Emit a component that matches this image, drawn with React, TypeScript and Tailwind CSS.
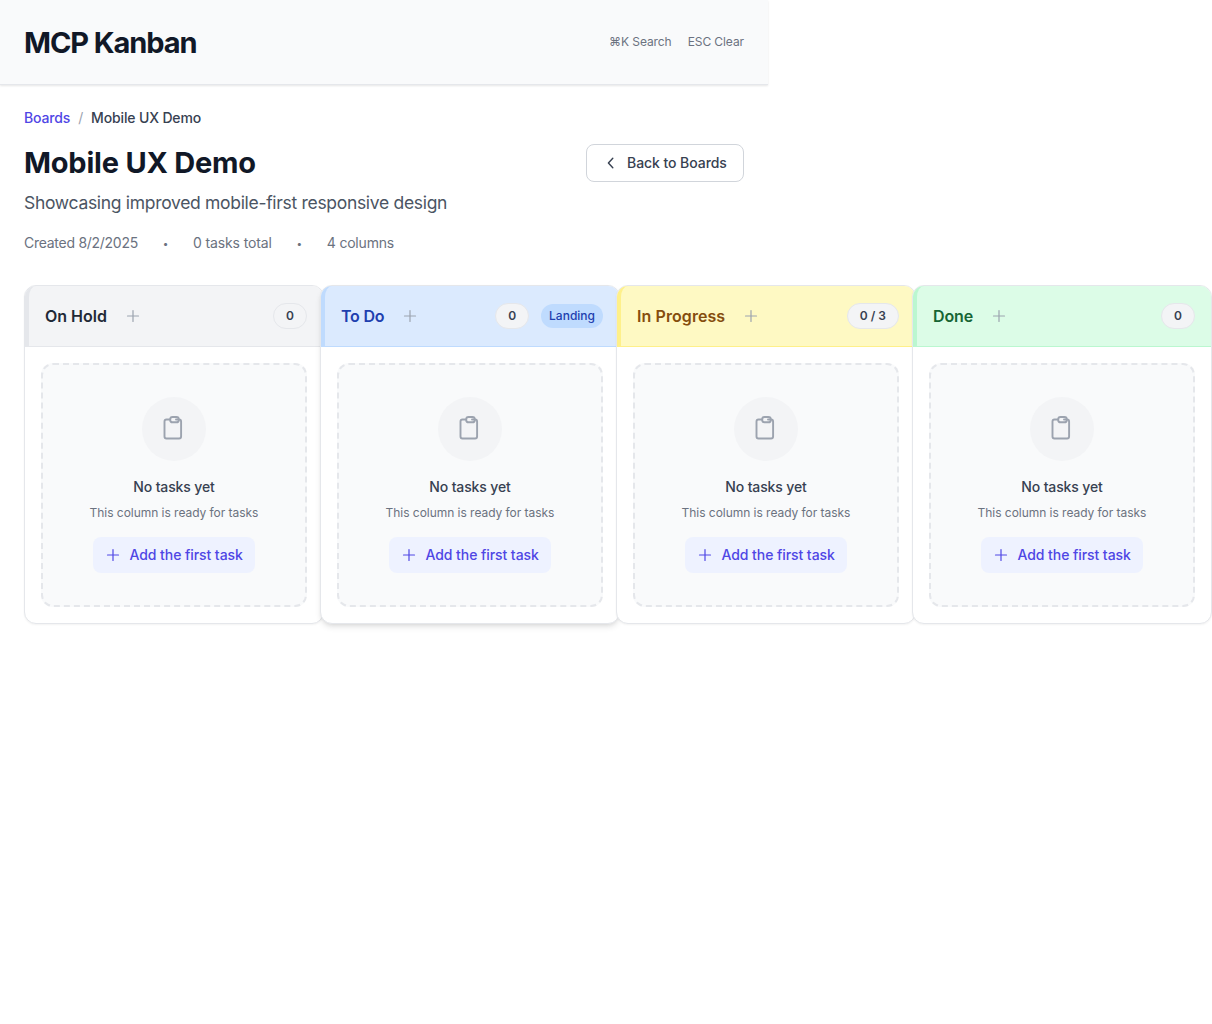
import React from "react";

type Column = {
  name: string;
  count: string;
  landing?: boolean;
  header: string;
  title: string;
  shadow: string;
};

const columns: Column[] = [
  { name: "On Hold", count: "0", header: "bg-[#f3f4f6] border-[#e5e7eb]", title: "text-[#1f2937]", shadow: "shadow-[0_1px_2px_rgba(0,0,0,0.05)]" },
  { name: "To Do", count: "0", landing: true, header: "bg-[#dbeafe] border-[#bfdbfe]", title: "text-[#1e40af] tracking-[-0.2px]", shadow: "shadow-[0_4px_6px_-1px_rgba(0,0,0,0.1),0_2px_4px_-2px_rgba(0,0,0,0.1)]" },
  { name: "In Progress", count: "0 / 3", header: "bg-[#fef9c3] border-[#fef08a]", title: "text-[#854d0e] tracking-[0.08px]", shadow: "shadow-[0_1px_2px_rgba(0,0,0,0.05)]" },
  { name: "Done", count: "0", header: "bg-[#dcfce7] border-[#bbf7d0]", title: "text-[#166534] tracking-[-0.15px]", shadow: "shadow-[0_1px_2px_rgba(0,0,0,0.05)]" },
];

function Plus({ className }: { className: string }) {
  return (
    <svg className={className} viewBox="0 0 16 16" fill="none" stroke="currentColor" strokeWidth="1.2" strokeLinecap="round">
      <path d="M8 2.5v11M2.5 8h11" />
    </svg>
  );
}

function Clipboard() {
  return (
    <svg className="-ml-[3px] h-7 w-7 text-[#9ca3af]" viewBox="0 0 28 28" fill="none" stroke="currentColor" strokeWidth="1.9" strokeLinecap="round" strokeLinejoin="round">
      <path d="M11.2 4.5H7.5A2 2 0 0 0 5.5 6.5V21.5A2 2 0 0 0 7.5 23.5H20.1A2 2 0 0 0 22.1 21.5V6.5A2 2 0 0 0 20.1 4.5H17" />
      <rect x="11.2" y="2" width="8.6" height="5.3" rx="2.4" />
    </svg>
  );
}

function BoardColumn({ column }: { column: Column }) {
  return (
    <section className={`-mr-1 w-[300px] shrink-0 rounded-xl border border-[#e5e7eb] bg-white ${column.shadow}`}>
      <header className={`flex h-[61px] items-center justify-between rounded-t-[11px] border-b border-l-4 pr-4 pl-4 ${column.header}`}>
        <div className="flex items-center">
          <h2 className={`text-base font-semibold ${column.title}`}>{column.name}</h2>
          <button className="ml-[18px] text-[#9ca3af]"><Plus className="h-4 w-4" /></button>
        </div>
        <div className="flex items-center gap-3">
          <span className="flex h-[26px] items-center rounded-full border border-[#e5e7eb] bg-[#f3f4f6] px-3 text-xs font-semibold text-[#374151]">{column.count}</span>
          {column.landing && <span className="flex h-6 items-center rounded-full bg-[#bfdbfe] px-2 text-xs font-medium text-[#1e40af]">Landing</span>}
        </div>
      </header>
      <div className="p-4">
        <div className="flex h-[244px] flex-col items-center rounded-xl border-2 border-dashed border-[#e5e7eb] bg-[#f9fafb] pt-8">
          <div className="flex h-16 w-16 items-center justify-center rounded-full bg-[#f3f4f6]"><Clipboard /></div>
          <h3 className="mt-4 text-sm font-medium tracking-[-0.12px] text-[#374151]">No tasks yet</h3>
          <p className="mt-2 text-xs leading-4 tracking-[-0.04px] text-[#6b7280]">This column is ready for tasks</p>
          <button className="mt-4 flex h-9 w-[162px] items-center gap-[8.5px] rounded-lg bg-[#eef2ff] px-3 text-sm font-medium tracking-[-0.07px] whitespace-nowrap text-[#4f46e5]">
            <Plus className="h-4 w-4 shrink-0" />
            Add the first task
          </button>
        </div>
      </div>
    </section>
  );
}

export default function App() {
  return (
    <div className="min-h-screen w-[1212px] overflow-hidden bg-white font-['Inter',sans-serif]">
      <header className="flex h-[85px] w-[768px] items-center justify-between border-b border-[#e5e7eb] bg-[#f9fafb] px-6 shadow-[0_1px_2px_rgba(0,0,0,0.1)]">
        <h1 className="pt-0.5 text-[29px] leading-9 font-bold tracking-[-1.1px] text-[#111827]">MCP Kanban</h1>
        <div className="flex gap-4 text-xs tracking-[-0.08px] text-[#6b7280]">
          <span>⌘K Search</span>
          <span>ESC Clear</span>
        </div>
      </header>
      <main className="w-[768px] px-6 pt-[23px]">
        <nav className="flex gap-2 text-sm tracking-[-0.15px]">
          <a className="font-medium text-[#4f46e5]">Boards</a>
          <span className="text-[#9ca3af]">/</span>
          <span className="font-medium text-[#374151]">Mobile UX Demo</span>
        </nav>
        <div className="mt-4 flex items-start justify-between">
          <div>
            <h2 className="text-[29px] leading-[38px] font-bold tracking-[-0.22px] text-[#111827]">Mobile UX Demo</h2>
            <p className="mt-[7px] text-[17.5px] leading-7 tracking-[-0.31px] text-[#4b5563]">Showcasing improved mobile-first responsive design</p>
          </div>
          <button className="flex h-[38px] w-[158px] items-center gap-2 rounded-lg border border-[#d1d5db] bg-white px-4 text-sm font-medium tracking-[-0.06px] whitespace-nowrap text-[#374151]">
            <svg className="h-4 w-4 shrink-0" viewBox="0 0 16 16" fill="none" stroke="currentColor" strokeWidth="1.4" strokeLinecap="round" strokeLinejoin="round"><path d="M9.8 3.2 5.4 8l4.4 4.8" /></svg>
            Back to Boards
          </button>
        </div>
        <div className="mt-4 flex gap-6 text-sm text-[#6b7280]">
          <span className="tracking-[-0.27px]">Created 8/2/2025</span>
          <span className="w-[7px] text-center text-[10px] leading-5">•</span>
          <span className="tracking-[-0.12px]">0 tasks total</span>
          <span className="w-[7px] text-center text-[10px] leading-5">•</span>
          <span className="tracking-[-0.2px]">4 columns</span>
        </div>
        <div className="mt-8 flex">
          {columns.map((c) => <BoardColumn key={c.name} column={c} />)}
        </div>
      </main>
    </div>
  );
}
